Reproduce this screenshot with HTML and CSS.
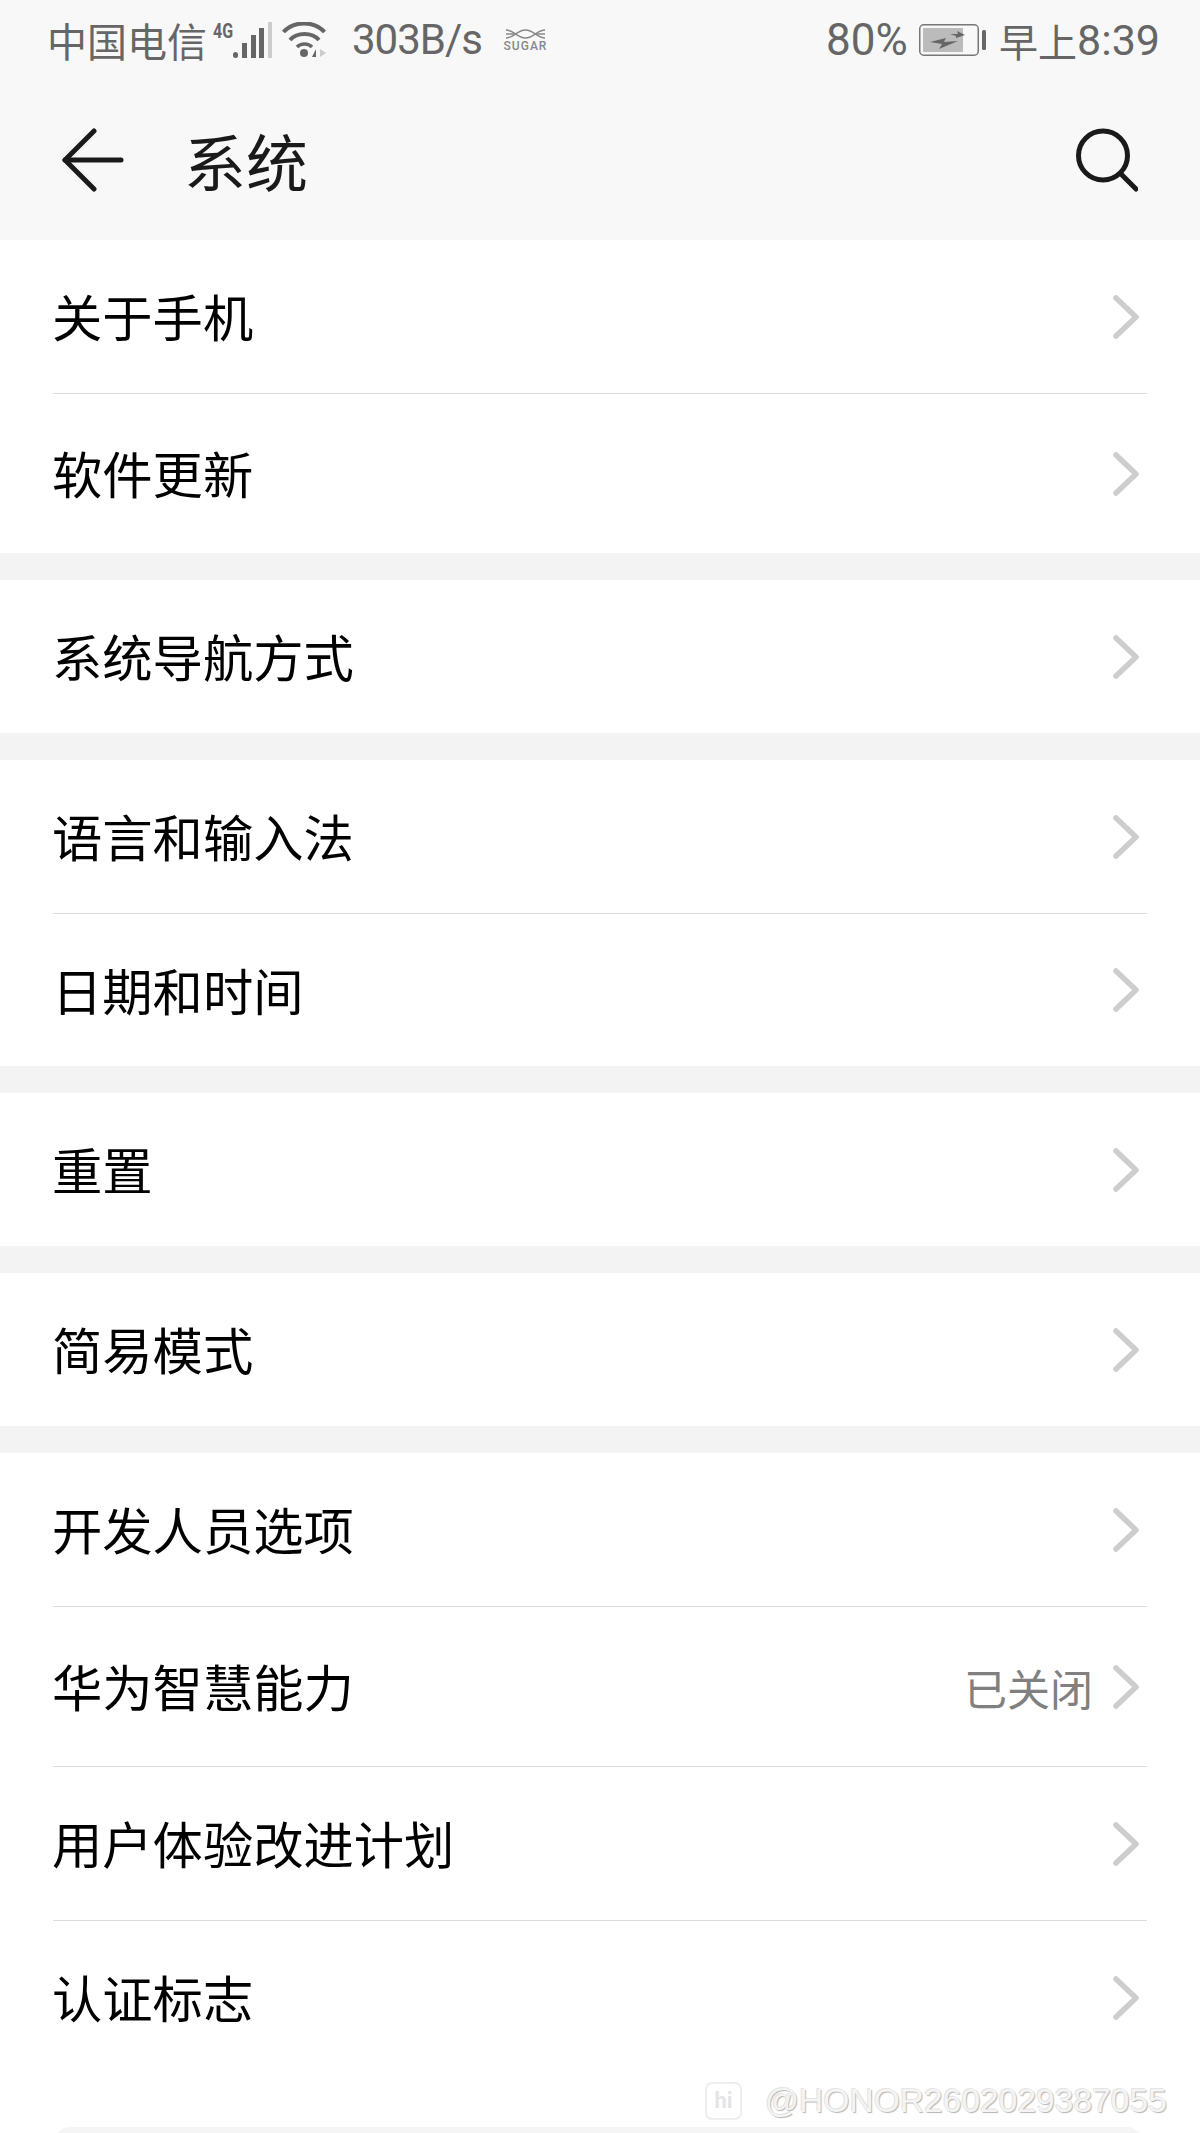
FILE: index.html
```html
<!DOCTYPE html>
<html lang="zh-CN">
<head>
<meta charset="utf-8">
<title>系统</title>
<link rel="stylesheet" href="styles.css">
</head>
<body>
<div class="phone">
  <header class="top">
    <div class="status">
      <div class="status-left">
        <span class="carrier">中国电信</span>
        <span class="net">4G</span>
        <svg class="signal" width="39" height="36" viewBox="0 0 39 36"><rect x="0" y="30" width="5" height="6" rx="2.500" fill="#666"/><rect x="9" y="21" width="5" height="15" fill="#666"/><rect x="18" y="13" width="5" height="23" fill="#666"/><rect x="26" y="6" width="5" height="30" fill="#666"/><rect x="35" y="0" width="4" height="36" fill="#ccc"/></svg>
        <svg class="wifi" width="44" height="36" viewBox="0 0 44 36" fill="none"><path d="M1.500 10C12 -1.500 32 -1.500 42.500 10" stroke="#666" stroke-width="4"/><path d="M8 18C15 10 30 10 37 18" stroke="#666" stroke-width="4"/><path d="M15 25C19 21 26 21 30 25" stroke="#666" stroke-width="3.500"/><circle cx="22" cy="31" r="4" fill="#666"/><path d="M34 27V35H30Z" fill="#666"/><path d="M38 27L44 31L38 35Z" fill="#ccc"/></svg>
        <span class="speed">303B/s</span>
        <div class="sugar">
          <svg width="41" height="12" viewBox="0 0 41 12" fill="none" stroke="#888" stroke-width="1.500"><path d="M1 2C9 2 12 10 20.500 10S32 2 40 2"/><path d="M1 10C9 10 12 2 20.500 2S32 10 40 10"/><path d="M1 6H9M32 6H40"/></svg>
          <span class="sugar-text">SUGAR</span>
        </div>
      </div>
      <div class="status-right">
        <span class="pct">80%</span>
        <svg class="battery" width="67" height="32" viewBox="0 0 67 32"><rect x="0.750" y="0.750" width="58.500" height="30.500" rx="4" fill="none" stroke="#777" stroke-width="1.500"/><rect x="4" y="4" width="40" height="24" rx="1" fill="#bbb"/><path d="M11 18L27 14L25 18L39 17L20 25L23 20Z" fill="#666"/><path d="M31 10L39 10L38 7L46 11L37 14L37 12Z" fill="#666"/><rect x="63" y="6" width="4" height="20" rx="1.500" fill="#666"/></svg>
        <span class="clock-cjk">早上</span><span class="clock-num">8:39</span>
      </div>
    </div>
    <div class="appbar">
      <div class="appbar-left">
        <svg class="back" width="64" height="64" viewBox="0 0 64 64" fill="none" stroke="#1a1a1a" stroke-width="5" stroke-linecap="round" stroke-linejoin="round"><path d="M33 3L4 32L33 61"/><path d="M4 32H60"/></svg>
        <h1 class="title">系统</h1>
      </div>
      <svg class="search" width="64" height="64" viewBox="0 0 64 64" fill="none" stroke="#1a1a1a" stroke-width="5" stroke-linecap="round"><circle cx="29" cy="27.500" r="24.500"/><path d="M48 47L62 61"/></svg>
    </div>
  </header>

  <main class="list">
    <section class="group">
      <div class="row row-a"><div class="row-in line"><span class="label">关于手机</span><svg class="chev" width="26" height="44" viewBox="0 0 26 44" fill="none"><path d="M3 3L23 22L3 41"/></svg></div></div>
      <div class="row row-b"><div class="row-in"><span class="label">软件更新</span><svg class="chev" width="26" height="44" viewBox="0 0 26 44" fill="none"><path d="M3 3L23 22L3 41"/></svg></div></div>
    </section>
    <section class="group">
      <div class="row"><div class="row-in"><span class="label">系统导航方式</span><svg class="chev" width="26" height="44" viewBox="0 0 26 44" fill="none"><path d="M3 3L23 22L3 41"/></svg></div></div>
    </section>
    <section class="group">
      <div class="row row-a"><div class="row-in line"><span class="label">语言和输入法</span><svg class="chev" width="26" height="44" viewBox="0 0 26 44" fill="none"><path d="M3 3L23 22L3 41"/></svg></div></div>
      <div class="row row-c"><div class="row-in"><span class="label">日期和时间</span><svg class="chev" width="26" height="44" viewBox="0 0 26 44" fill="none"><path d="M3 3L23 22L3 41"/></svg></div></div>
    </section>
    <section class="group">
      <div class="row"><div class="row-in"><span class="label">重置</span><svg class="chev" width="26" height="44" viewBox="0 0 26 44" fill="none"><path d="M3 3L23 22L3 41"/></svg></div></div>
    </section>
    <section class="group">
      <div class="row"><div class="row-in"><span class="label">简易模式</span><svg class="chev" width="26" height="44" viewBox="0 0 26 44" fill="none"><path d="M3 3L23 22L3 41"/></svg></div></div>
    </section>
    <section class="group group-last">
      <div class="row row-a"><div class="row-in line"><span class="label">开发人员选项</span><svg class="chev" width="26" height="44" viewBox="0 0 26 44" fill="none"><path d="M3 3L23 22L3 41"/></svg></div></div>
      <div class="row row-d"><div class="row-in line"><span class="label">华为智慧能力</span><div class="row-end"><span class="value">已关闭</span><svg class="chev" width="26" height="44" viewBox="0 0 26 44" fill="none"><path d="M3 3L23 22L3 41"/></svg></div></div></div>
      <div class="row row-a"><div class="row-in line"><span class="label">用户体验改进计划</span><svg class="chev" width="26" height="44" viewBox="0 0 26 44" fill="none"><path d="M3 3L23 22L3 41"/></svg></div></div>
      <div class="row"><div class="row-in"><span class="label">认证标志</span><svg class="chev" width="26" height="44" viewBox="0 0 26 44" fill="none"><path d="M3 3L23 22L3 41"/></svg></div></div>
      <div class="peek"></div>
    </section>
  </main>

  <div class="watermark">
    <span class="hi"><span class="hi-text">hi</span></span>
    <span class="mark">@HONOR2602029387055</span>
  </div>
</div>
</body>
</html>
```
FILE: styles.css
```css
* { box-sizing: border-box; }
html, body { margin: 0; padding: 0; background: #fff; }
body { font-family: "Noto Sans CJK SC", "Noto Sans", sans-serif; }
.phone { position: relative; width: 1200px; height: 2133px; overflow: hidden; background: #fff; }

.top { height: 240px; background: #f8f8f8; }
.status { height: 80px; padding: 0 40px 0 47px; display: flex; justify-content: space-between; align-items: center; color: #666; }
.status-left, .status-right { display: flex; align-items: center; }
.carrier { font-size: 40px; line-height: 46px; width: 166px; padding-bottom: 1px; }
.net { font-family: "Roboto", sans-serif; font-size: 20px; font-weight: 700; line-height: 16px; width: 20px; align-self: flex-start; margin-top: 7px; transform: scaleX(.8); transform-origin: left; white-space: nowrap; }
.signal { display: block; margin-right: 10px; }
.wifi { display: block; margin-right: 26px; }
.speed { font-family: "Roboto", sans-serif; font-size: 42px; font-weight: 400; letter-spacing: -1px; width: 153px; line-height: 48px; }
.sugar { width: 41px; display: flex; flex-direction: column; align-items: center; gap: 1px; }
.sugar svg { display: block; }
.sugar-text { font-family: "Roboto", sans-serif; font-size: 12px; font-weight: 500; line-height: 11px; color: #888; letter-spacing: 1px; white-space: nowrap; }
.pct { font-family: "Roboto", sans-serif; font-size: 44px; font-weight: 400; line-height: 48px; width: 93px; }
.battery { display: block; margin-right: 13px; }
.clock-cjk { font-size: 39px; line-height: 46px; }
.clock-num { font-family: "Roboto", sans-serif; font-size: 43px; line-height: 48px; }

.appbar { height: 160px; padding: 0 62px 0 61px; display: flex; align-items: center; justify-content: space-between; }
.appbar-left { display: flex; align-items: center; }
.back { display: block; margin-right: 59px; }
.title { margin: 0; font-size: 62px; font-weight: 400; line-height: 70px; color: #1a1a1a; }
.search { display: block; }

.list { background: #f3f3f3; }
.group { background: #fff; margin-bottom: 27px; }
.group-last { margin-bottom: 0; }
.row { height: 153px; padding: 0 53px; }
.row-a { height: 154px; }
.row-b { height: 159px; }
.row-c { height: 152px; }
.row-d { height: 160px; }
.row-in { height: 100%; display: flex; align-items: center; justify-content: space-between; padding-right: 8px; }
.line { border-bottom: 1px solid #dcdcdc; }
.label { font-size: 50.300px; line-height: 60px; padding-bottom: 3px; margin-left: -1px; color: #000; }
.row-end { display: flex; align-items: center; }
.value { font-size: 43px; line-height: 50px; color: #808080; margin-right: 20px; }
.chev { display: block; stroke: #cdcdcd; stroke-width: 5.5; stroke-linecap: round; stroke-linejoin: round; }

.peek { height: 60px; margin: 53px 57px 0 54px; background: #f5f5f5; border-radius: 16px 16px 0 0; }

.watermark { position: absolute; left: 705px; top: 2081px; display: flex; align-items: center; }
.hi { width: 37px; height: 38px; border: 2px solid #eee; border-radius: 7px; display: flex; align-items: center; justify-content: center; margin-right: 23px; }
.hi-text { font-family: "Roboto", sans-serif; font-size: 22px; font-weight: 700; line-height: 24px; color: #e4e4e4; }
.mark { font-family: "Liberation Sans", sans-serif; font-size: 33.600px; line-height: 40px; color: #f4f4f4; text-shadow: 1px 1px 1px #b5b5b5, -1px -1px 0 #e4e4e4; }
```
